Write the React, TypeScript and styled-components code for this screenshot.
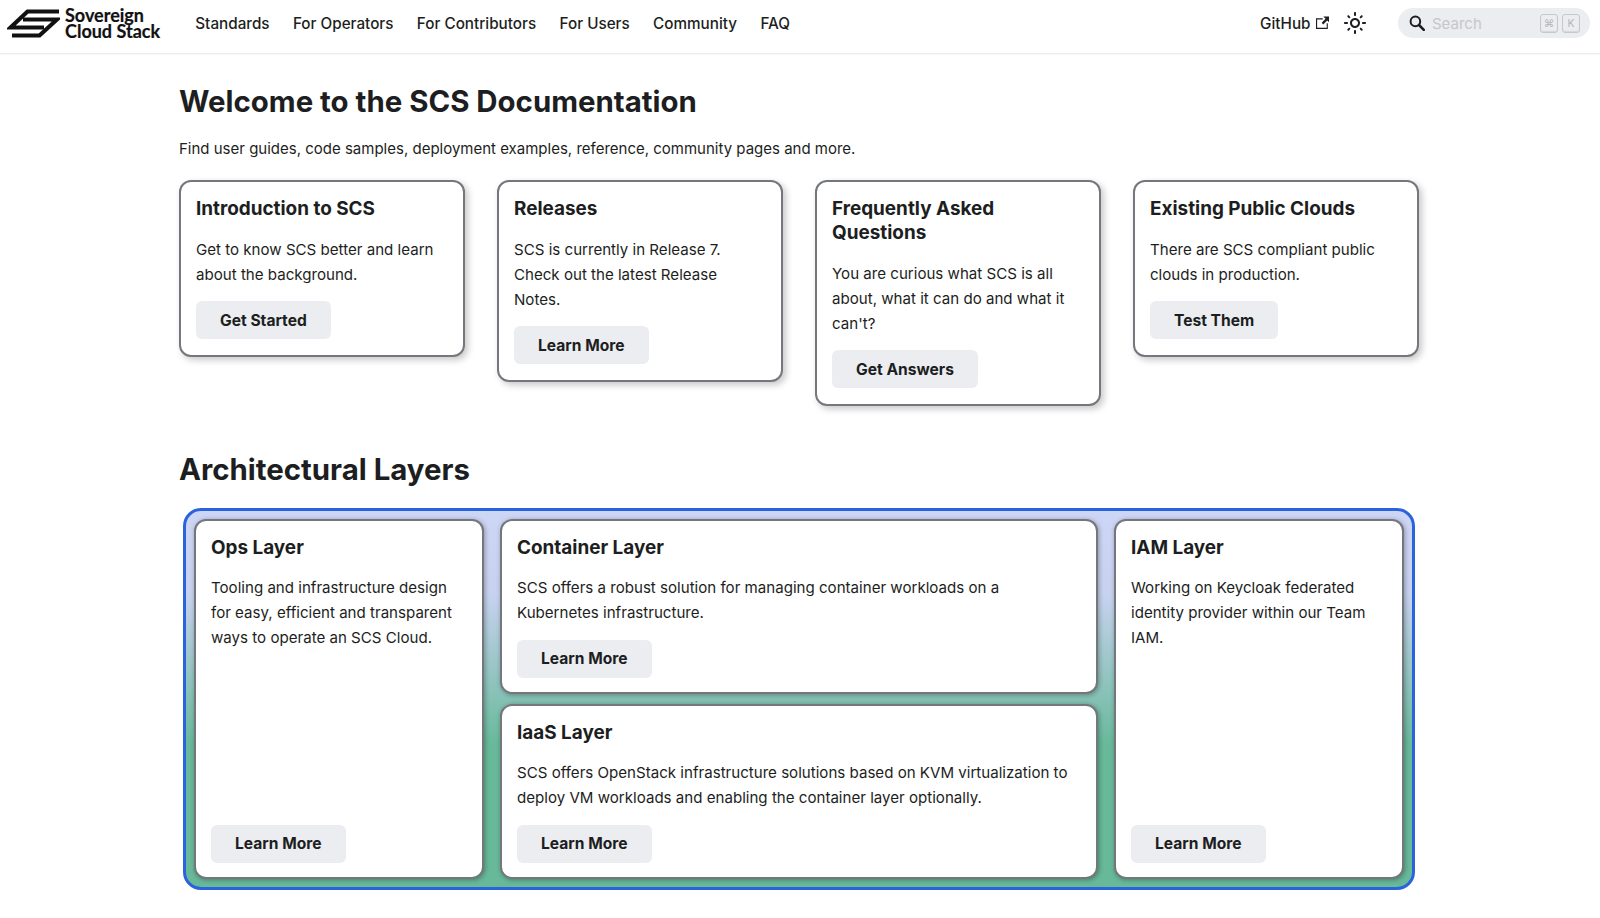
import React from "react";
import styled, { createGlobalStyle } from "styled-components";

const GlobalStyle = createGlobalStyle`
  * {
    box-sizing: border-box;
  }

  html, body {
    margin: 0;
    padding: 0;
    background: #fff;
    color: #1c1e21;
    font-family: Inter, "Liberation Sans", sans-serif;
    font-size: 15.1px;
  }
`;

const Navbar = styled.nav`
  height: 53px;
  display: flex;
  align-items: center;
  padding: 0 10px 7px 7px;
  background: #fff;
  box-shadow: 0 1px 2px 0 rgba(0, 0, 0, 0.1);
`;

const Brand = styled.a`
  display: flex;
  align-items: center;
  gap: 5px;
  margin-right: 23.5px;
  color: #111;
`;

const BrandText = styled.span`
  font-family: Lato, sans-serif;
  font-weight: 700;
  font-size: 18px;
  line-height: 16.5px;
  -webkit-text-stroke: 0.2px #111;
`;

const NavLink = styled.a`
  padding: 0 11.7px;
  font-size: 15.25px;
  font-weight: 500;
  color: #1c1e21;
  white-space: nowrap;
`;

const NavRight = styled.div`
  margin-left: auto;
  display: flex;
  align-items: center;
`;

const GithubLink = styled(NavLink)`
  display: flex;
  align-items: center;
  gap: 5px;
  padding: 0;
`;

const ThemeButton = styled.button`
  width: 32px;
  height: 32px;
  margin: 0 27px 0 10px;
  padding: 0;
  display: flex;
  align-items: center;
  justify-content: center;
  background: none;
  border: none;
`;

const SearchBox = styled.div`
  width: 192px;
  height: 30px;
  padding: 0 10px 0 11px;
  display: flex;
  align-items: center;
  border-radius: 15px;
  background: #ebedf0;
`;

const SearchLabel = styled.span`
  margin-left: 7px;
  color: #c4c7cc;
  font-size: 15px;
`;

const Keys = styled.span`
  margin-left: auto;
  display: flex;
  gap: 4px;
`;

const Key = styled.kbd`
  width: 18px;
  height: 19px;
  display: flex;
  align-items: center;
  justify-content: center;
  border: 1px solid #c6c8cd;
  border-radius: 3px;
  background: #ebedf0;
  box-shadow: inset 0 -1px 1px #d5d6da;
  color: #b3b5ba;
  font-family: Inter, sans-serif;
  font-size: 10.5px;
`;

const Main = styled.main`
  padding: 0 181px 0 179px;
`;

const Heading = styled.h1`
  margin: 0;
  padding-top: 29px;
  font-size: 29.4px;
  line-height: 40px;
  font-weight: 700;
`;

const Intro = styled.p`
  margin: 14px 0 0;
  font-size: 15px;
  line-height: 25px;
`;

const CardRow = styled.div`
  margin-top: 19px;
  display: grid;
  grid-template-columns: repeat(4, 1fr);
  gap: 32px;
  align-items: start;
`;

const Card = styled.article<{ $raised?: boolean }>`
  display: flex;
  flex-direction: column;
  align-items: flex-start;
  padding: 15px 15px ${(p) => (p.$raised ? "15.5px" : "14px")};
  background: #fff;
  border: 2px solid #74777c;
  border-radius: 12px;
  box-shadow: ${(p) =>
    p.$raised
      ? "3px 3px 7px rgba(0, 0, 0, 0.22)"
      : "1px 1px 5px rgba(0, 0, 0, 0.32)"};
`;

const CardTitle = styled.h3`
  margin: 0 0 15.5px;
  font-size: 18.9px;
  line-height: 24px;
  font-weight: 700;
`;

const CardText = styled.p`
  margin: 0 0 14.5px;
  line-height: 25px;
  flex: 1;
`;

const Button = styled.a`
  padding: 0 24px;
  height: 38px;
  display: inline-flex;
  align-items: center;
  background: #ebedf0;
  border-radius: 6px;
  color: #1c1e21;
  font-size: 15.6px;
  font-weight: 700;
  white-space: nowrap;
`;

const SectionHeading = styled.h2`
  margin: 44.5px 0 0;
  font-size: 29.4px;
  line-height: 40px;
  font-weight: 700;
`;

const LayerBox = styled.section`
  width: 1232px;
  margin: 17.5px 0 0 4px;
  padding: 8px;
  display: grid;
  grid-template-columns: 290px 1fr 290px;
  grid-template-rows: 175px 175px;
  column-gap: 16px;
  row-gap: 10px;
  border: 3px solid #2b63dc;
  border-radius: 18px;
  background: linear-gradient(180deg, #cdd6f5 0%, #c8d2f0 22%, #68b99a 62%, #68b99a 100%);
`;

const TallCard = styled(Card)`
  grid-row: span 2;
`;

const BrandMark = () => (
  <svg width="53" height="31" viewBox="7 8 53 31" fill="none" aria-hidden="true">
    <path d="M59 11.5 H27.5 L10.5 27.5 H44" stroke="#111" strokeWidth="4.2" />
    <path d="M12 35.5 H39.5 L57 19.5 H23" stroke="#111" strokeWidth="4.2" />
  </svg>
);

const ExternalIcon = () => (
  <svg width="13.5" height="13.5" viewBox="0 0 24 24" aria-hidden="true">
    <path
      fill="#1c1e21"
      d="M21 13v10h-21v-19h12v2h-10v15h17v-8h2zm3-12h-10.988l4.035 4-6.977 7.07 2.828 2.828 6.977-7.07 4.125 4.172v-11z"
    />
  </svg>
);

const SunIcon = () => (
  <svg width="24" height="24" viewBox="0 0 24 24" aria-hidden="true">
    <path
      fill="#1c1e21"
      d="M12,9c1.65,0,3,1.35,3,3s-1.35,3-3,3s-3-1.35-3-3S10.35,9,12,9 M12,7c-2.76,0-5,2.24-5,5s2.24,5,5,5s5-2.24,5-5 S14.76,7,12,7L12,7z M2,13l2,0c0.55,0,1-0.45,1-1s-0.45-1-1-1l-2,0c-0.55,0-1,0.45-1,1S1.45,13,2,13z M20,13l2,0c0.55,0,1-0.45,1-1 s-0.45-1-1-1l-2,0c-0.55,0-1,0.45-1,1S19.45,13,20,13z M11,2v2c0,0.55,0.45,1,1,1s1-0.45,1-1V2c0-0.55-0.45-1-1-1S11,1.45,11,2z M11,20v2c0,0.55,0.45,1,1,1s1-0.45,1-1v-2c0-0.55-0.45-1-1-1C11.45,19,11,19.45,11,20z M5.99,4.58c-0.39-0.39-1.03-0.39-1.41,0 c-0.39,0.39-0.39,1.03,0,1.41l1.06,1.06c0.39,0.39,1.03,0.39,1.41,0s0.39-1.03,0-1.41L5.99,4.58z M18.36,16.95 c-0.39-0.39-1.03-0.39-1.41,0c-0.39,0.39-0.39,1.03,0,1.41l1.06,1.06c0.39,0.39,1.03,0.39,1.41,0c0.39-0.39,0.39-1.03,0-1.41 L18.36,16.95z M19.42,5.99c0.39-0.39,0.39-1.03,0-1.41c-0.39-0.39-1.03-0.39-1.41,0l-1.06,1.06c-0.39,0.39-0.39,1.03,0,1.41 s1.03,0.39,1.41,0L19.42,5.99z M7.05,18.36c0.39-0.39,0.39-1.03,0-1.41c-0.39-0.39-1.03-0.39-1.41,0l-1.06,1.06 c-0.39,0.39-0.39,1.03,0,1.41s1.03,0.39,1.41,0L7.05,18.36z"
    />
  </svg>
);

const SearchIcon = () => (
  <svg width="16" height="16" viewBox="0 0 16 16" fill="none" aria-hidden="true">
    <circle cx="6.4" cy="6.4" r="4.8" stroke="#1c1e21" strokeWidth="2" />
    <path d="M10 10 L14.8 14.8" stroke="#1c1e21" strokeWidth="2.6" strokeLinecap="round" />
  </svg>
);

const navItems = ["Standards", "For Operators", "For Contributors", "For Users", "Community", "FAQ"];

const introCards = [
  { title: "Introduction to SCS", text: "Get to know SCS better and learn about the background.", cta: "Get Started" },
  { title: "Releases", text: "SCS is currently in Release 7. Check out the latest Release Notes.", cta: "Learn More" },
  { title: "Frequently Asked Questions", text: "You are curious what SCS is all about, what it can do and what it can't?", cta: "Get Answers" },
  { title: "Existing Public Clouds", text: "There are SCS compliant public clouds in production.", cta: "Test Them" },
];

const App: React.FC = () => (
  <>
    <GlobalStyle />
    <Navbar>
      <Brand>
        <BrandMark />
        <BrandText>
          Sovereign
          <br />
          Cloud Stack
        </BrandText>
      </Brand>
      {navItems.map((item) => (
        <NavLink key={item}>{item}</NavLink>
      ))}
      <NavRight>
        <GithubLink>
          GitHub
          <ExternalIcon />
        </GithubLink>
        <ThemeButton aria-label="Switch theme">
          <SunIcon />
        </ThemeButton>
        <SearchBox>
          <SearchIcon />
          <SearchLabel>Search</SearchLabel>
          <Keys>
            <Key>⌘</Key>
            <Key>K</Key>
          </Keys>
        </SearchBox>
      </NavRight>
    </Navbar>
    <Main>
      <Heading>Welcome to the SCS Documentation</Heading>
      <Intro>Find user guides, code samples, deployment examples, reference, community pages and more.</Intro>
      <CardRow>
        {introCards.map((card) => (
          <Card key={card.title} $raised>
            <CardTitle>{card.title}</CardTitle>
            <CardText>{card.text}</CardText>
            <Button>{card.cta}</Button>
          </Card>
        ))}
      </CardRow>
      <SectionHeading>Architectural Layers</SectionHeading>
      <LayerBox>
        <TallCard>
          <CardTitle>Ops Layer</CardTitle>
          <CardText>Tooling and infrastructure design for easy, efficient and transparent ways to operate an SCS Cloud.</CardText>
          <Button>Learn More</Button>
        </TallCard>
        <Card>
          <CardTitle>Container Layer</CardTitle>
          <CardText>SCS offers a robust solution for managing container workloads on a Kubernetes infrastructure.</CardText>
          <Button>Learn More</Button>
        </Card>
        <TallCard>
          <CardTitle>IAM Layer</CardTitle>
          <CardText>Working on Keycloak federated identity provider within our Team IAM.</CardText>
          <Button>Learn More</Button>
        </TallCard>
        <Card>
          <CardTitle>IaaS Layer</CardTitle>
          <CardText>SCS offers OpenStack infrastructure solutions based on KVM virtualization to deploy VM workloads and enabling the container layer optionally.</CardText>
          <Button>Learn More</Button>
        </Card>
      </LayerBox>
    </Main>
  </>
);

export default App;
